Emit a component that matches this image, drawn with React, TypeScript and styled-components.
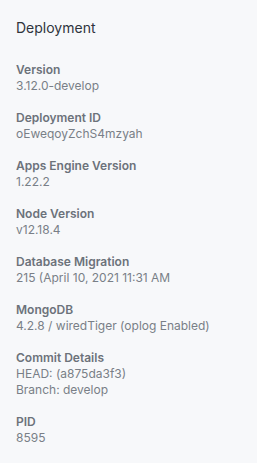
import React from "react";
import styled, { createGlobalStyle } from "styled-components";

const GlobalStyle = createGlobalStyle`
  html, body {
    margin: 0;
    padding: 0;
    background: #ffffff;
  }
  body {
    font-family: Inter, "Noto Sans", sans-serif;
    -webkit-font-smoothing: antialiased;
  }
`;

const Panel = styled.section`
  width: 257px;
  height: 463px;
  box-sizing: border-box;
  background: #f7f8fa;
  padding: 18px 16px 16px;
`;

const Title = styled.h2`
  margin: 0 0 24px;
  font-size: 14px;
  line-height: 20px;
  font-weight: 400;
  color: #2f343d;
`;

const List = styled.dl`
  margin: 0;
  display: flex;
  flex-direction: column;
  gap: 16px;
`;

const Item = styled.div`
  display: flex;
  flex-direction: column;
`;

const Label = styled.dt`
  font-size: 12px;
  line-height: 16px;
  font-weight: 600;
  color: #6c727a;
`;

const Value = styled.dd`
  margin: 0;
  font-size: 12px;
  line-height: 16px;
  font-weight: 400;
  color: #797f87;
`;

const rows: { label: string; values: string[] }[] = [
  { label: "Version", values: ["3.12.0-develop"] },
  { label: "Deployment ID", values: ["oEweqoyZchS4mzyah"] },
  { label: "Apps Engine Version", values: ["1.22.2"] },
  { label: "Node Version", values: ["v12.18.4"] },
  { label: "Database Migration", values: ["215 (April 10, 2021 11:31 AM"] },
  { label: "MongoDB", values: ["4.2.8 / wiredTiger (oplog Enabled)"] },
  { label: "Commit Details", values: ["HEAD: (a875da3f3)", "Branch: develop"] },
  { label: "PID", values: ["8595"] },
];

const App: React.FC = () => (
  <>
    <GlobalStyle />
    <Panel>
      <Title>Deployment</Title>
      <List>
        {rows.map(({ label, values }) => (
          <Item key={label}>
            <Label>{label}</Label>
            {values.map((v) => (
              <Value key={v}>{v}</Value>
            ))}
          </Item>
        ))}
      </List>
    </Panel>
  </>
);

export default App;
